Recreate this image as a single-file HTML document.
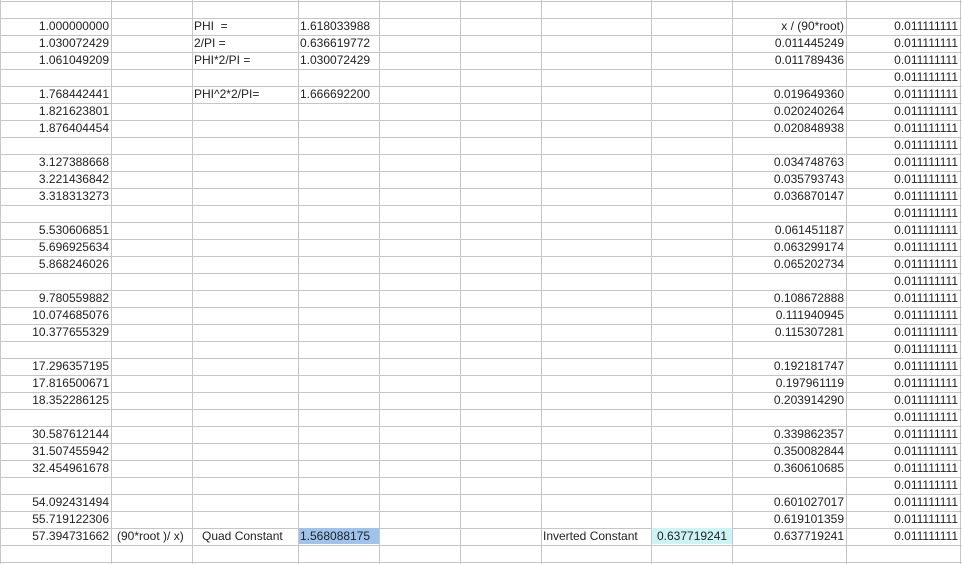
<!DOCTYPE html><html><head><style>
body{margin:0;width:962px;height:564px;overflow:hidden;background:#fff;position:relative;font-family:"Liberation Sans",Arial,sans-serif;font-size:12px;color:#222}
.h{position:absolute;left:0;width:962px;height:1px;background:#c6c6c6}
.v{position:absolute;top:0;height:564px;width:1px;background:#c6c6c6}
.c{position:absolute;height:17px;line-height:17px;white-space:nowrap}
.r{text-align:right}
</style></head><body>
<div id="g"></div>
<script>
var g=document.getElementById('g'),h='';
for(var y=1;y<564;y+=17)h+='<div class="h" style="top:'+y+'px"></div>';
[0,111,192,298,379,460,541,651,732,846,960].forEach(function(x){h+='<div class="v" style="left:'+x+'px"></div>'});
h+='<div class="c" style="left:299px;top:528px;width:80px;height:16px;background:#9ec4ee"></div>';
h+='<div class="c" style="left:652px;top:528px;width:80px;height:16px;background:#ccf4f4"></div>';
var A=['1.000000000','1.030072429','1.061049209','','1.768442441','1.821623801','1.876404454','','3.127388668','3.221436842','3.318313273','','5.530606851','5.696925634','5.868246026','','9.780559882','10.074685076','10.377655329','','17.296357195','17.816500671','18.352286125','','30.587612144','31.507455942','32.454961678','','54.092431494','55.719122306','57.394731662'];
var I=['x / (90*root)','0.011445249','0.011789436','','0.019649360','0.020240264','0.020848938','','0.034748763','0.035793743','0.036870147','','0.061451187','0.063299174','0.065202734','','0.108672888','0.111940945','0.115307281','','0.192181747','0.197961119','0.203914290','','0.339862357','0.350082844','0.360610685','','0.601027017','0.619101359','0.637719241'];
function cell(l,w,r,t,al){h+='<div class="c'+(al?' r':'')+'" style="left:'+l+'px;width:'+w+'px;top:'+(18+r*17)+'px">'+t+'</div>';}
for(var i=0;i<31;i++){cell(0,109,i,A[i],1);cell(732,112,i,I[i],1);cell(846,112,i,'0.011111111',1);}
cell(194,100,0,'PHI&nbsp; =');cell(194,100,1,'2/PI =');cell(194,100,2,'PHI*2/PI =');cell(194,100,4,'PHI^2*2/PI=');
cell(300,80,0,'1.618033988');cell(300,80,1,'0.636619772');cell(300,80,2,'1.030072429');cell(300,80,4,'1.666692200');
cell(117,80,30,'(90*root )/ x)');cell(202,100,30,'Quad Constant');cell(300,80,30,'1.568088175');
cell(543,110,30,'Inverted Constant');cell(657,80,30,'0.637719241');
g.innerHTML=h;
</script>
</body></html>
